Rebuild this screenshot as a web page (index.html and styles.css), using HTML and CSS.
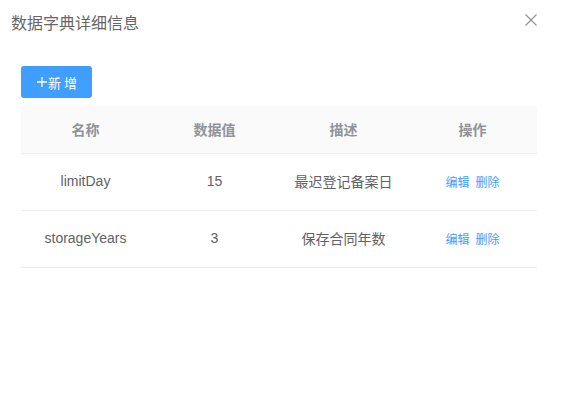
FILE: index.html
```html
<!DOCTYPE html>
<html lang="zh">
<head>
<meta charset="utf-8">
<title>数据字典详细信息</title>
<link rel="stylesheet" href="styles.css">
</head>
<body>
<div class="dialog">
  <div class="dialog-header">
    <span class="dialog-title">数据字典详细信息</span>
    <button class="close-btn" aria-label="关闭">
      <svg width="12" height="12" viewBox="0 0 12 12"><path d="M0.5 0.5 L11.5 11.5 M11.5 0.5 L0.5 11.5" stroke="#909399" stroke-width="1.2" fill="none"/></svg>
    </button>
  </div>
  <div class="dialog-body">
    <button class="btn-primary"><svg class="plus" width="10" height="10" viewBox="0 0 10 10"><path d="M5 0 V10 M0 5 H10" stroke="#fff" stroke-width="1.3" fill="none"/></svg>新 增</button>
    <div class="table">
      <div class="row head">
        <div class="cell">名称</div>
        <div class="cell">数据值</div>
        <div class="cell">描述</div>
        <div class="cell">操作</div>
      </div>
      <div class="row">
        <div class="cell">limitDay</div>
        <div class="cell">15</div>
        <div class="cell">最迟登记备案日</div>
        <div class="cell ops"><a class="link">编辑</a><a class="link">删除</a></div>
      </div>
      <div class="row">
        <div class="cell">storageYears</div>
        <div class="cell">3</div>
        <div class="cell">保存合同年数</div>
        <div class="cell ops"><a class="link">编辑</a><a class="link">删除</a></div>
      </div>
    </div>
  </div>
</div>
</body>
</html>
```
FILE: styles.css
```css
* { box-sizing: border-box; }
html, body {
  margin: 0;
  padding: 0;
  background: #fff;
}
body {
  font-family: "Liberation Sans", "Noto Sans CJK SC", sans-serif;
  color: #606266;
}
.dialog {
  width: 567px;
  height: 402px;
}
.dialog-header {
  display: flex;
  justify-content: space-between;
  align-items: flex-start;
  padding: 10px 30px 0 11px;
  height: 34px;
}
.dialog-title {
  font-size: 16px;
  line-height: 24px;
  color: #666;
  font-family: "Noto Sans CJK SC", sans-serif;
}
.close-btn {
  border: none;
  background: none;
  padding: 0;
  margin-top: 4px;
  width: 12px;
  height: 12px;
  display: flex;
}
.dialog-body {
  padding: 32px 30px 0 21px;
}
.btn-primary {
  display: flex;
  align-items: center;
  justify-content: center;
  gap: 1px;
  width: 71px;
  height: 32px;
  border: none;
  border-radius: 3px;
  background: #409eff;
  color: #fff;
  font-size: 13px;
  font-family: "Noto Sans CJK SC", sans-serif;
  padding: 0 0 0 1px;
  margin-bottom: 8px;
}
.plus {
  display: block;
  flex: none;
}
.table {
  width: 516px;
  font-size: 14px;
}
.row {
  display: grid;
  grid-template-columns: repeat(4, 1fr);
  height: 57px;
  border-bottom: 1px solid #ebeef5;
  align-items: center;
}
.row.head {
  height: 48px;
  background: #fafafa;
  color: #909399;
  font-weight: bold;
  font-family: "Noto Sans CJK SC", sans-serif;
}
.cell {
  text-align: center;
  line-height: 23px;
}
.row:not(.head) .cell {
  padding-bottom: 1px;
}
.row:not(.head) .cell:nth-child(3) {
  font-family: "Noto Sans CJK SC", sans-serif;
}
.ops {
  display: flex;
  justify-content: center;
  gap: 6px;
}
.link {
  color: #409eff;
  font-size: 12px;
  font-family: "Noto Sans CJK SC", sans-serif;
  cursor: pointer;
}
```
